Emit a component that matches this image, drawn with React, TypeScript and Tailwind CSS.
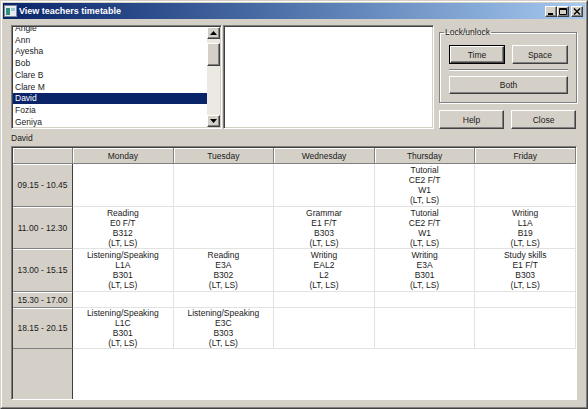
import React from "react";

const teachers = ["Angie", "Ann", "Ayesha", "Bob", "Clare B", "Clare M", "David", "Fozia", "Geniya"];
const days = ["Monday", "Tuesday", "Wednesday", "Thursday", "Friday"];

type Lesson = string[] | null;

const slots: { time: string; lessons: Lesson[] }[] = [
  {
    time: "09.15 - 10.45",
    lessons: [null, null, null, ["Tutorial", "CE2 F/T", "W1", "(LT, LS)"], null],
  },
  {
    time: "11.00 - 12.30",
    lessons: [
      ["Reading", "E0 F/T", "B312", "(LT, LS)"],
      null,
      ["Grammar", "E1 F/T", "B303", "(LT, LS)"],
      ["Tutorial", "CE2 F/T", "W1", "(LT, LS)"],
      ["Writing", "L1A", "B19", "(LT, LS)"],
    ],
  },
  {
    time: "13.00 - 15.15",
    lessons: [
      ["Listening/Speaking", "L1A", "B301", "(LT, LS)"],
      ["Reading", "E3A", "B302", "(LT, LS)"],
      ["Writing", "EAL2", "L2", "(LT, LS)"],
      ["Writing", "E3A", "B301", "(LT, LS)"],
      ["Study skills", "E1 F/T", "B303", "(LT, LS)"],
    ],
  },
  { time: "15.30 - 17.00", lessons: [null, null, null, null, null] },
  {
    time: "18.15 - 20.15",
    lessons: [
      ["Listening/Speaking", "L1C", "B301", "(LT, LS)"],
      ["Listening/Speaking", "E3C", "B303", "(LT, LS)"],
      null,
      null,
      null,
    ],
  },
];

const raised =
  "border border-t-white border-l-white border-r-[#404040] border-b-[#404040] shadow-[inset_-1px_-1px_0_#808080] bg-[#d4d0c8]";
const sunken =
  "border border-t-[#808080] border-l-[#808080] border-r-white border-b-white shadow-[inset_1px_1px_0_#404040,inset_-1px_-1px_0_#d4d0c8]";

function Button({ label, className, isDefault }: { label: string; className: string; isDefault?: boolean }) {
  return (
    <div className={`${className} ${isDefault ? "border border-black" : ""}`}>
      <div className={`${raised} flex h-full w-full items-center justify-center`}>{label}</div>
    </div>
  );
}

function Arrow({ down }: { down?: boolean }) {
  return (
    <div className={`${raised} flex h-[12px] w-[13px] items-center justify-center`}>
      <svg width="7" height="4" viewBox="0 0 7 4">
        <path d={down ? "M0 0h7L3.5 4z" : "M0 4h7L3.5 0z"} fill="#000" />
      </svg>
    </div>
  );
}

function CaptionButton({ kind }: { kind: "min" | "max" | "close" }) {
  return (
    <div className={`${raised} flex h-[11px] w-[12px] items-center justify-center`}>
      <svg width="8" height="7" viewBox="0 0 8 7">
        {kind === "min" && <rect x="1" y="5" width="5" height="2" fill="#000" />}
        {kind === "max" && (
          <path d="M0.5 0.5h7v6h-7z M0.5 1.5h7" stroke="#000" strokeWidth="1" fill="none" />
        )}
        {kind === "close" && <path d="M1 0.5l6 6M7 0.5l-6 6" stroke="#000" strokeWidth="1.4" />}
      </svg>
    </div>
  );
}

export default function App() {
  return (
    <div className="h-[409px] w-[588px] overflow-hidden bg-[#d4d0c8] font-['Liberation_Sans',Arial,sans-serif] text-[8.5px] leading-[10px] text-[#1a1a1a]">
      <div className="h-full border border-t-[#d4d0c8] border-l-[#d4d0c8] border-r-[#404040] border-b-[#404040]">
        <div className="h-full border border-t-white border-l-white border-r-[#808080] border-b-[#808080] p-px">
          {/* title bar */}
          <div className="flex h-[16px] items-center bg-linear-to-r from-[#0a246a] to-[#a6caf0] pl-[1px] pr-[2px]">
            <svg width="13" height="12" viewBox="0 0 13 12" className="shrink-0">
              <rect x="0.5" y="0.5" width="12" height="11" fill="#e8ecf0" stroke="#7a8a9a" />
              <rect x="2" y="3" width="4" height="7" fill="#2f8f7a" />
              <rect x="7" y="3" width="4" height="3" fill="#9cc8d8" />
            </svg>
            <span className="ml-[2px] text-[9px] font-bold text-white">View teachers timetable</span>
            <div className="ml-auto flex items-center">
              <CaptionButton kind="min" />
              <CaptionButton kind="max" />
              <div className="ml-[2px]">
                <CaptionButton kind="close" />
              </div>
            </div>
          </div>

          <div className="pl-[8px] pt-[6px]">
            {/* top row */}
            <div className="flex h-[104px]">
              <div className={`${sunken} flex w-[211px] bg-white p-px`}>
                <div className="flex-1 overflow-hidden">
                  <div className="-mt-[5px]">
                    {teachers.map((t) => (
                      <div
                        key={t}
                        className={`flex h-[11.75px] items-center pl-[2px] ${
                          t === "David" ? "bg-[#0a246a] text-white" : ""
                        }`}
                      >
                        {t}
                      </div>
                    ))}
                  </div>
                </div>
                <div className="flex w-[13px] flex-col bg-[#ece9e2]">
                  <Arrow />
                  <div className={`${raised} mt-[4px] h-[23px] w-[13px]`} />
                  <div className="flex-1" />
                  <Arrow down />
                </div>
              </div>
              <div className={`${sunken} ml-[1px] w-[211px] bg-white`} />

              <div className="ml-[5px] w-[138px]">
                <fieldset className="mt-[2px] h-[76px] border border-[#808080] px-0 shadow-[inset_1px_1px_0_white,1px_1px_0_white]">
                  <legend className="ml-[4px] px-px">Lock/unlock</legend>
                  <div className="pl-[9px] pt-[8px]">
                    <div className="flex gap-[7px]">
                      <Button label="Time" className="h-[19px] w-[56px]" isDefault />
                      <Button label="Space" className="h-[19px] w-[56px]" />
                    </div>
                    <div className="mt-[5px] h-[2px] w-[119px] border-t border-t-[#808080] border-b border-b-white" />
                    <Button label="Both" className="mt-[5px] h-[18px] w-[119px]" />
                  </div>
                </fieldset>
                <div className="mt-[7px] flex gap-[7px]">
                  <Button label="Help" className="h-[19px] w-[65px]" />
                  <Button label="Close" className="h-[19px] w-[65px]" />
                </div>
              </div>
            </div>

            <div className="mt-[4px] h-[10px]">David</div>

            {/* timetable */}
            <div className="mt-[3px] h-[254px] w-[566px] border border-t-[#808080] border-l-[#808080] border-r-white border-b-white shadow-[inset_1px_1px_0_#404040]">
              <div className="grid h-full grid-cols-[60px_repeat(5,minmax(0,1fr))] grid-rows-[16px_43px_42px_43px_16px_41px_1fr] pl-px pt-px">
                <div className="border-r border-b border-r-[#808080] border-b-[#808080] bg-[#d4d0c8] shadow-[inset_1px_1px_0_white]" />
                {days.map((d) => (
                  <div
                    key={d}
                    className="flex items-center justify-center border-r border-b border-r-[#808080] border-b-[#808080] bg-[#d4d0c8] shadow-[inset_1px_1px_0_white]"
                  >
                    {d}
                  </div>
                ))}
                {slots.map((s) => (
                  <React.Fragment key={s.time}>
                    <div className="flex items-center justify-center border-r border-b border-r-[#404040] border-b-[#808080] bg-[#d4d0c8] shadow-[inset_0_1px_0_white]">
                      {s.time}
                    </div>
                    {s.lessons.map((l, i) => (
                      <div
                        key={i}
                        className="flex flex-col items-center justify-center border-r border-b border-[#e2e2e2] bg-white"
                      >
                        {l && l.map((line, j) => <div key={j}>{line}</div>)}
                      </div>
                    ))}
                  </React.Fragment>
                ))}
                <div className="border-r border-r-[#404040] bg-[#d4d0c8]" />
                <div className="col-span-5 bg-white" />
              </div>
            </div>
          </div>
        </div>
      </div>
    </div>
  );
}
